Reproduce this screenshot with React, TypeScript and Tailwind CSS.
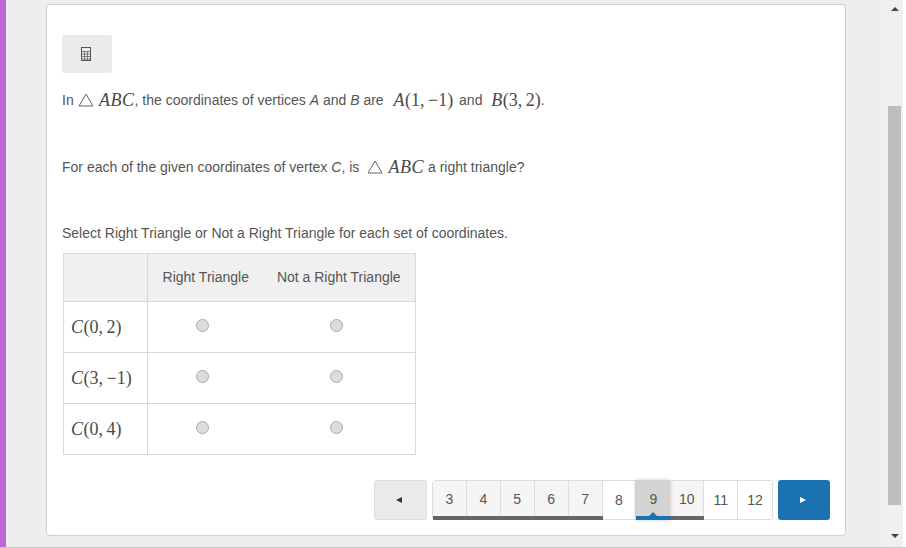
import React from 'react'

const Tex = ({ children, className = '' }: { children: React.ReactNode; className?: string }) => (
  <span className={`font-['Liberation_Serif',serif] text-[18px] text-[#4a4a4a] ${className}`}>{children}</span>
)

const Var = ({ children }: { children: React.ReactNode }) => <i className="tracking-[0.5px]">{children}</i>

const Triangle = () => (
  <svg width="16" height="14" viewBox="0 0 16 14" className="mr-[1px] inline-block align-[-1px]" fill="none">
    <path d="M8 1 L15 13 H1 Z" stroke="#666" strokeWidth="1" />
  </svg>
)

const Radio = () => (
  <span className="mx-auto block h-[13px] w-[13px] rounded-full border border-[#aaa] bg-[#dcdcdc]" />
)

const CalcIcon = () => (
  <svg width="10" height="14" viewBox="0 0 10 14" fill="none">
    <rect x="0.5" y="0.5" width="9" height="13" stroke="#555" />
    <path d="M0.5 4.5H9.5M0.5 7H9.5M0.5 9.5H9.5M0.5 12H9.5M3.5 4.5V13.5M6.5 4.5V13.5" stroke="#666" strokeWidth="0.8" />
  </svg>
)

const rows = [
  { c: '(0,\u20092)' },
  { c: '(3,\u2009−1)' },
  { c: '(0,\u20094)' },
]

const pages = [
  { n: 3, seen: true },
  { n: 4, seen: true },
  { n: 5, seen: true },
  { n: 6, seen: true },
  { n: 7, seen: true },
  { n: 8, seen: false },
  { n: 9, current: true },
  { n: 10, seen: true },
  { n: 11, seen: false },
  { n: 12, seen: false },
]

const Pager = () => (
  <div className="mr-[15px] mt-[25px] flex justify-end">
    <button className="mr-[5px] flex h-[40px] w-[53px] items-center justify-center rounded-[3px] border border-[#ddd] bg-[#eaeaea] pr-[3px]">
      <svg width="6" height="6" viewBox="0 0 6 6"><path d="M6 0V6L0 3Z" fill="#333" /></svg>
    </button>
    <div className="flex h-[40px] w-[341px] rounded-[3px] border border-[#ddd] bg-white">
      {pages.map((p) => {
        if (p.current) {
          return (
            <div key={p.n} className="-my-px relative flex h-[40px] w-[34px] items-center justify-center border-b-[4px] border-[#1a73b0] bg-[#d4d4d4] pt-[2px] shadow-[0_0_4px_rgba(0,0,0,0.2)]">
              {p.n}
              <span className="absolute bottom-0 left-[13px] h-0 w-0 border-x-[4px] border-b-[4px] border-x-transparent border-b-[#1a73b0]" />
            </div>
          )
        }
        return (
          <div
            key={p.n}
            className={
              p.seen
                ? '-mb-px flex h-[39px] w-[34px] flex-col bg-[#f5f5f5]'
                : 'flex w-[34px] items-center justify-center border-r border-[#ddd] bg-white last:border-r-0'
            }
          >
            {p.seen ? (
              <>
                <span className="flex flex-1 items-center justify-center border-r border-[#ddd] pt-[2px]">{p.n}</span>
                <span className="h-[4px] bg-[#666]" />
              </>
            ) : (
              p.n
            )}
          </div>
        )
      })}
    </div>
    <button className="ml-[5px] flex h-[40px] w-[52px] items-center justify-center rounded-[3px] bg-[#1a73b0] pr-[3px]">
      <svg width="6" height="6" viewBox="0 0 6 6"><path d="M0 0V6L6 3Z" fill="#fff" /></svg>
    </button>
  </div>
)

const App = () => {
  return (
    <div className="flex h-[548px] w-[906px] overflow-hidden border-b border-[#c8c8c8] bg-[#eeeeee] font-['Liberation_Sans',Arial,sans-serif] text-[14px] text-[#555]">
      <div className="w-[6px] bg-[#bd66d4]" />
      <div className="pl-[40px] pt-[4px]">
        <div className="h-[532px] w-[800px] rounded-[4px] border border-[#cfcfcf] bg-white pl-[15px] pt-[30px]">
          <button className="flex h-[38px] w-[50px] items-center justify-center rounded-[2px] bg-[#ebebeb] pr-[2px]">
            <CalcIcon />
          </button>

          <p className="mt-[14px] flex h-[26px] items-center whitespace-pre">
            In <Tex><Triangle /> <Var>ABC</Var></Tex>, the coordinates of vertices <i>A</i> and <i>B</i> are{'  '}
            <Tex className="ml-[2px] mr-[2px]"><Var>A</Var>(1,{'\u2009'}−1)</Tex> and{'  '}
            <Tex className="ml-[1px]"><Var>B</Var>(3,{'\u2009'}2)</Tex>.
          </p>

          <p className="mt-[41px] flex h-[26px] items-center whitespace-pre">
            For each of the given coordinates of vertex <i>C</i>, is{'  '}
            <Tex><Triangle /> <Var>ABC</Var></Tex> a right triangle?
          </p>

          <p className="mt-[40px] h-[26px] leading-[26px]">
            Select Right Triangle or Not a Right Triangle for each set of coordinates.
          </p>

          <table className="ml-px mt-[7px] w-[353px] table-fixed border-collapse border border-[#d9d9d9]">
            <thead>
              <tr className="h-[48px] bg-[#f0f0f0]">
                <th className="w-[84px] border-r border-[#d9d9d9]" />
                <th className="w-[115px] pl-[1px] font-normal">Right Triangle</th>
                <th className="font-normal">Not a Right Triangle</th>
              </tr>
            </thead>
            <tbody>
              {rows.map((r) => (
                <tr key={r.c} className="h-[51px] border-t border-[#d9d9d9]">
                  <td className="border-r border-[#d9d9d9] pl-[7px]">
                    <Tex><Var>C</Var>{r.c}</Tex>
                  </td>
                  <td className="pb-[4px] pr-[5px]"><Radio /></td>
                  <td className="pb-[4px] pr-[4px]"><Radio /></td>
                </tr>
              ))}
            </tbody>
          </table>

          <Pager />
        </div>
      </div>

      <div className="ml-[40px] flex h-[547px] w-[17px] flex-col items-center bg-[#f0f0f0]">
        <div className="flex h-[17px] w-full items-center justify-center">
          <span className="h-0 w-0 border-x-[4px] border-b-[4px] border-x-transparent border-b-[#444]" />
        </div>
        <div className="mt-[89px] h-[399px] w-[13px] bg-[#bdbdbd]" />
        <div className="flex flex-1 items-end justify-center pb-[9px]">
          <span className="h-0 w-0 border-x-[4px] border-t-[4px] border-x-transparent border-t-[#444]" />
        </div>
      </div>
      <div className="flex-1 bg-white" />
    </div>
  )
}

export default App
